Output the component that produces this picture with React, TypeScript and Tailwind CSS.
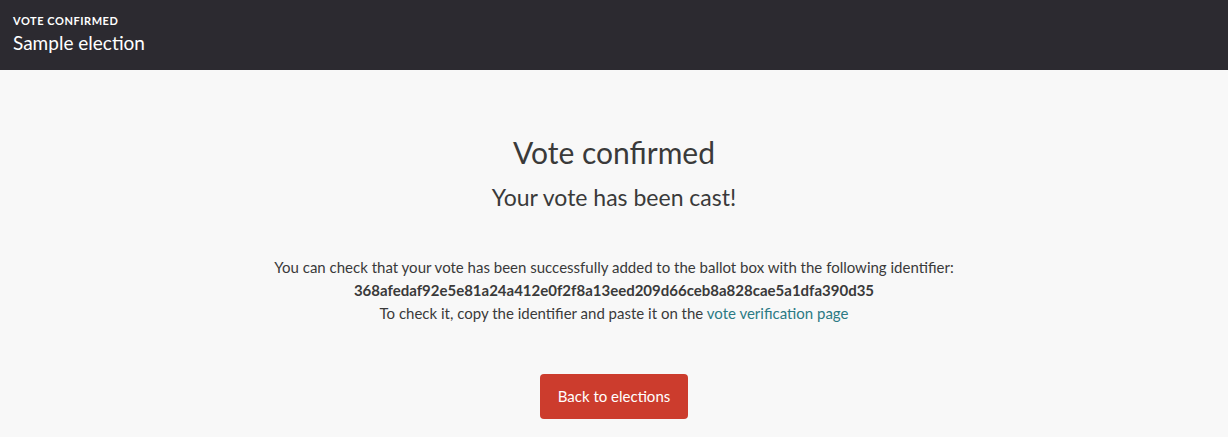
import React from 'react';

const font = { fontFamily: 'Lato, "Noto Sans", sans-serif' };

const Header: React.FC = () => (
  <header className="bg-[#2c2a30] h-[70px] px-[13px] pt-[14px] text-white">
    <div className="text-[11px] font-bold tracking-[0.05em] leading-[14px] uppercase">Vote confirmed</div>
    <div className="text-[19px] leading-[26px] mt-[2px]">Sample election</div>
  </header>
);

const App: React.FC = () => {
  return (
    <div className="min-h-[437px] bg-[#f8f8f8] text-[#3a3a3a]" style={font}>
      <Header />
      <main className="flex flex-col items-center text-center pt-[64px]">
        <h1 className="text-[30px] leading-[36px]">Vote confirmed</h1>
        <h2 className="text-[23px] leading-[28px] mt-[13px]">Your vote has been cast!</h2>
        <div className="mt-[45px] text-[15px] leading-[23px]">
          <p>You can check that your vote has been successfully added to the ballot box with the following identifier:</p>
          <p className="font-bold">368afedaf92e5e81a24a412e0f2f8a13eed209d66ceb8a828cae5a1dfa390d35</p>
          <p>
            To check it, copy the identifier and paste it on the{' '}
            <a href="#" className="text-[#2c7a84]">vote verification page</a>
          </p>
        </div>
        <button className="mt-[49px] h-[45px] w-[148px] rounded-[4px] bg-[#cc3c2d] text-white text-[15px]">
          Back to elections
        </button>
      </main>
    </div>
  );
};

export default App;
